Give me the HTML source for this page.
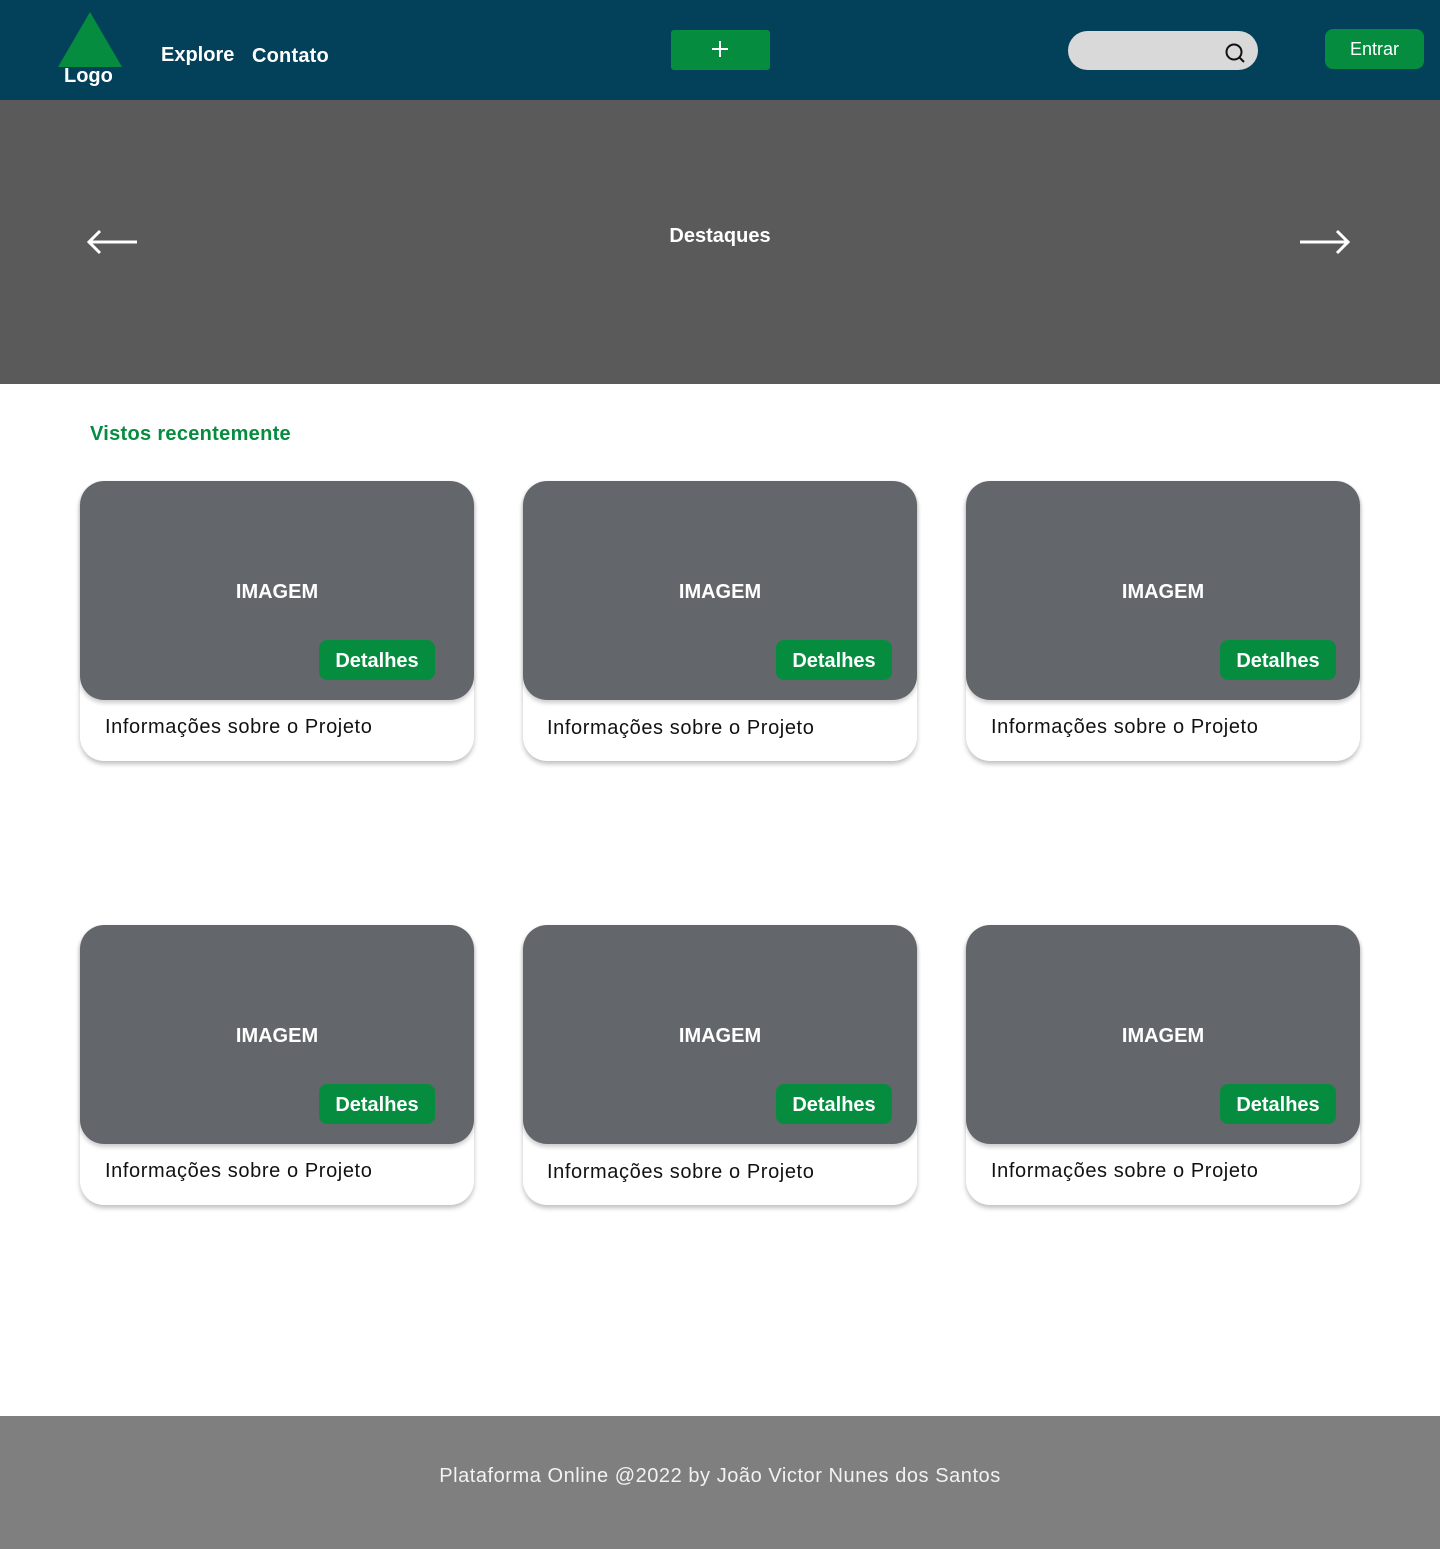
<!DOCTYPE html>
<html><head><meta charset="utf-8"><style>
*{margin:0;padding:0;box-sizing:border-box}
body{width:1440px;height:1549px;position:relative;background:#fff;font-family:"Liberation Sans",sans-serif;overflow:hidden}
.a{position:absolute}
.hdr{left:0;top:0;width:1440px;height:100px;background:#034059}
.nav{color:#fff;font-size:20px;font-weight:bold}
.hero{left:0;top:100px;width:1440px;height:284px;background:#5a5a5a}
.card{position:absolute;width:394px;height:280px;border-radius:24px;background:#fff;box-shadow:0 3px 5px rgba(0,0,0,.25)}
.img{position:absolute;left:0;top:0;width:394px;height:219px;border-radius:24px;background:#63676b;box-shadow:0 3px 4px rgba(0,0,0,.2)}
.img span{position:absolute;left:0;width:394px;top:100px;text-align:center;color:#fff;font-size:20px;font-weight:bold}
.det{position:absolute;left:239px;top:159px;width:116px;height:40px;border-radius:8px;background:#058c3f;color:#fff;font-size:20px;font-weight:bold;text-align:center;line-height:42px}
.info{position:absolute;left:25px;top:235px;font-size:20px;color:#111;letter-spacing:0.6px}
.foot{left:0;top:1416px;width:1440px;height:133px;background:#7f7f7f;color:#f2f2f2;font-size:20px;text-align:center;line-height:120px;letter-spacing:0.55px}
</style></head><body>
<div class="a hdr"></div>
<svg class="a" style="left:58px;top:12px" width="64" height="56"><polygon points="32,0 64,55 0,55" fill="#058c3f"/></svg>
<div class="a" style="left:64px;top:65px;color:#fff;font-size:20px;font-weight:bold">Logo</div>
<div class="a nav" style="left:161px;top:44px">Explore</div>
<div class="a nav" style="left:252px;top:45px;letter-spacing:0.2px">Contato</div>
<div class="a" style="left:671px;top:30px;width:99px;height:40px;background:#058c3f;border-radius:3px"></div>
<svg class="a" style="left:710px;top:39px" width="20" height="20"><path d="M10 2V18M2 10H18" stroke="#fff" stroke-width="2"/></svg>
<div class="a" style="left:1068px;top:31px;width:190px;height:39px;background:#d9d9d9;border-radius:20px"></div>
<svg class="a" style="left:1224px;top:41px" width="24" height="24"><circle cx="10" cy="11" r="7.5" fill="none" stroke="#111" stroke-width="2"/><path d="M15.5 16.5L20 21" stroke="#111" stroke-width="2"/></svg>
<div class="a" style="left:1325px;top:29px;width:99px;height:40px;background:#058c3f;border-radius:8px;color:#fff;font-size:18px;text-align:center;line-height:40px">Entrar</div>
<div class="a hero"></div>
<svg class="a" style="left:85px;top:229px" width="54" height="28"><path d="M52 13H4M15 2L4 13L15 24" fill="none" stroke="#fff" stroke-width="3"/></svg>
<svg class="a" style="left:1298px;top:229px" width="54" height="28"><path d="M2 13H50M39 2L50 13L39 24" fill="none" stroke="#fff" stroke-width="3"/></svg>
<div class="a" style="left:0;width:1440px;top:225px;text-align:center;color:#fff;font-size:20px;font-weight:bold">Destaques</div>
<div class="a" style="left:90px;top:423px;color:#058c3f;font-size:20px;font-weight:bold;letter-spacing:0.3px">Vistos recentemente</div>

<div class="card" style="left:80px;top:481px"><div class="img"><span>IMAGEM</span><div class="det">Detalhes</div></div><div class="info">Informações sobre o Projeto</div></div>
<div class="card" style="left:523px;top:481px"><div class="img"><span>IMAGEM</span><div class="det" style="left:253px">Detalhes</div></div><div class="info" style="left:24px;top:236px">Informações sobre o Projeto</div></div>
<div class="card" style="left:966px;top:481px"><div class="img"><span>IMAGEM</span><div class="det" style="left:254px">Detalhes</div></div><div class="info">Informações sobre o Projeto</div></div>
<div class="card" style="left:80px;top:925px"><div class="img"><span>IMAGEM</span><div class="det">Detalhes</div></div><div class="info">Informações sobre o Projeto</div></div>
<div class="card" style="left:523px;top:925px"><div class="img"><span>IMAGEM</span><div class="det" style="left:253px">Detalhes</div></div><div class="info" style="left:24px;top:236px">Informações sobre o Projeto</div></div>
<div class="card" style="left:966px;top:925px"><div class="img"><span>IMAGEM</span><div class="det" style="left:254px">Detalhes</div></div><div class="info">Informações sobre o Projeto</div></div>

<div class="a foot">Plataforma Online @2022 by João Victor Nunes dos Santos</div>
</body></html>
